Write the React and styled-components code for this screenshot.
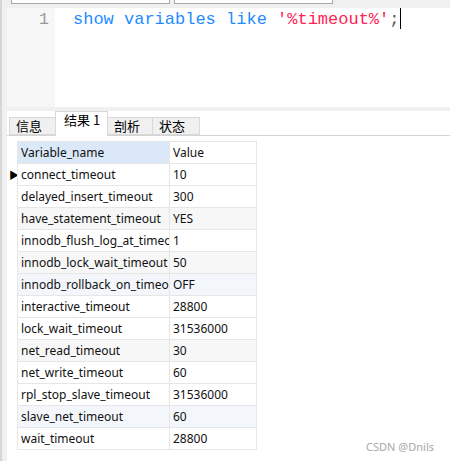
import React from 'react';
import styled, { createGlobalStyle } from 'styled-components';

const GlobalStyle = createGlobalStyle`
  html, body {
    margin: 0;
    padding: 0;
    background: #ffffff;
  }
  body {
    font-family: "Noto Sans CJK SC", "Noto Sans", sans-serif;
  }
`;

const rows = [
  ['connect_timeout', '10'],
  ['delayed_insert_timeout', '300'],
  ['have_statement_timeout', 'YES'],
  ['innodb_flush_log_at_timeout', '1'],
  ['innodb_lock_wait_timeout', '50'],
  ['innodb_rollback_on_timeout', 'OFF'],
  ['interactive_timeout', '28800'],
  ['lock_wait_timeout', '31536000'],
  ['net_read_timeout', '30'],
  ['net_write_timeout', '60'],
  ['rpl_stop_slave_timeout', '31536000'],
  ['slave_net_timeout', '60'],
  ['wait_timeout', '28800'],
];

const shades = {
  2: '#f7f7f7',
  4: '#f7f7f7',
  5: '#f3f7fc',
  8: '#f7f7f7',
  11: '#f3f7fc',
};

const Window = styled.div`
  position: relative;
  display: flex;
  width: 450px;
  height: 461px;
  overflow: hidden;
  background: #ffffff;
`;

const SideStrip = styled.div`
  width: 5px;
  flex: none;
  border-left: 2px solid #d6d6d6;
  background: #f0f0f0;
`;

const Main = styled.div`
  flex: 1;
  display: flex;
  flex-direction: column;
  min-width: 0;
`;

const TopBar = styled.div`
  height: 8px;
  display: flex;
  gap: 4px;
  padding-left: 4px;
  background: #f0f0f0;
`;

const InputStub = styled.div`
  width: 157px;
  height: 3px;
  background: #ffffff;
  border: 1px solid #a8a8a8;
  border-top: none;
`;

const Editor = styled.div`
  height: 99px;
  display: flex;
  background: #ffffff;
`;

const Gutter = styled.div`
  width: 48px;
  flex: none;
  background: #f7f7f7;
  color: #9a9a9a;
  font-family: "Liberation Mono", monospace;
  font-size: 17px;
  line-height: 22px;
  text-align: right;
  padding-right: 6px;
  box-sizing: border-box;
  padding-top: 1px;
`;

const Code = styled.div`
  padding-left: 18px;
  padding-top: 1px;
  font-family: "Liberation Mono", monospace;
  font-size: 17px;
  line-height: 22px;
  white-space: pre;
  display: flex;
  align-items: flex-start;
`;

const Token = styled.span`
  color: ${(p) => p.color};
`;

const Caret = styled.span`
  display: inline-block;
  width: 1px;
  height: 21px;
  margin-left: 1px;
  margin-top: -1px;
  background: #000000;
`;

const Divider = styled.div`
  height: 4px;
  background: #f0f0f0;
`;

const Results = styled.div`
  flex: 1;
  display: flex;
  flex-direction: column;
  background: #ffffff;
`;

const TabBar = styled.div`
  height: 24px;
  display: flex;
  align-items: flex-end;
  padding-left: 2px;
  border-bottom: 1px solid #d4d4d4;
`;

const Tab = styled.div`
  box-sizing: border-box;
  width: ${(p) => p.w}px;
  height: ${(p) => (p.active ? 25 : 18)}px;
  margin-bottom: ${(p) => (p.active ? -1 : 0)}px;
  background: ${(p) => (p.active ? '#ffffff' : '#f0f0f0')};
  border: 1px solid #d9d9d9;
  border-bottom: ${(p) => (p.active ? 'none' : '1px solid #d9d9d9')};
  margin-left: ${(p) => (p.first ? 0 : -1)}px;
  font-size: 13px;
  color: #000000;
  padding-left: ${(p) => (p.active ? 8 : 6)}px;
  line-height: ${(p) => (p.active ? 16 : 15)}px;
  position: relative;
  z-index: ${(p) => (p.active ? 1 : 0)};
`;

const GridWrap = styled.div`
  display: flex;
  margin-top: 5px;
`;

const Indicators = styled.div`
  width: 10px;
  flex: none;
  padding-top: 22px;
`;

const Indicator = styled.div`
  height: 22px;
  display: flex;
  align-items: center;
  padding-left: 2px;
  font-size: 10px;
  color: #000000;
`;

const Table = styled.div`
  display: grid;
  grid-template-columns: 152px 87px;
  border-top: 1px solid #e6e6e6;
  border-left: 1px solid #e6e6e6;
`;

const Cell = styled.div`
  box-sizing: border-box;
  height: 22px;
  padding-left: 3px;
  border-right: 1px solid #e6e6e6;
  border-bottom: 1px solid #e6e6e6;
  background: ${(p) => p.bg || '#ffffff'};
  font-family: "Noto Sans", sans-serif;
  font-size: 12px;
  line-height: 21px;
  color: #111111;
  white-space: nowrap;
  overflow: hidden;
`;

const Watermark = styled.div`
  position: absolute;
  right: 16px;
  bottom: 7px;
  font-family: "Noto Sans", sans-serif;
  font-size: 11px;
  color: #a8a8a8;
`;

const TabsData = [
  { label: '信息', w: 47 },
  { label: '结果 1', w: 53, active: true },
  { label: '剖析', w: 46 },
  { label: '状态', w: 48 },
];

export default function App() {
  return (
    <>
      <GlobalStyle />
      <Window>
        <SideStrip />
        <Main>
          <TopBar>
            <InputStub />
            <InputStub />
          </TopBar>
          <Editor>
            <Gutter>1</Gutter>
            <Code>
              <Token color="#1e8cff">show variables like </Token>
              <Token color="#ff2454">'%timeout%'</Token>
              <Token color="#555555">;</Token>
              <Caret />
            </Code>
          </Editor>
          <Divider />
          <Results>
            <TabBar>
              {TabsData.map((t, i) => (
                <Tab key={t.label} w={t.w} active={t.active} first={i === 0}>
                  {t.label}
                </Tab>
              ))}
            </TabBar>
            <GridWrap>
              <Indicators>
                <Indicator>▶</Indicator>
              </Indicators>
              <Table>
                <Cell bg="#dae8f7">Variable_name</Cell>
                <Cell>Value</Cell>
                {rows.map(([name, value], i) => (
                  <React.Fragment key={name}>
                    <Cell bg={shades[i]}>{name}</Cell>
                    <Cell bg={shades[i]}>{value}</Cell>
                  </React.Fragment>
                ))}
              </Table>
            </GridWrap>
          </Results>
        </Main>
        <Watermark>CSDN @Dnils</Watermark>
      </Window>
    </>
  );
}
